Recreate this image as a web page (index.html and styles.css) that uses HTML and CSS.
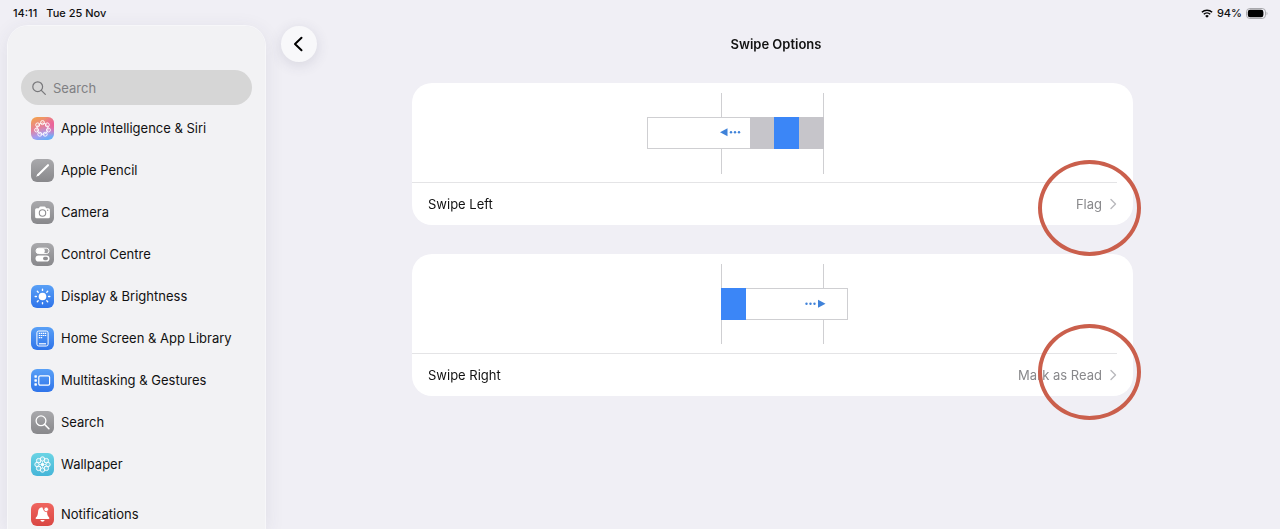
FILE: index.html
```html
<!DOCTYPE html>
<html lang="en">
<head>
    <meta charset="UTF-8">
    <meta name="viewport" content="width=device-width, initial-scale=1">
    <title>Swipe Options</title>
    <link rel="stylesheet" href="styles.css">
</head>
<body>
<div class="status-bar">
    <span>14:11</span>
    <span>Tue 25 Nov</span>
    <div class="status-right">
        <svg class="wifi" viewBox="0 0 12 9" width="12" height="9">
            <path d="M.9 3.2a7.4 7.4 0 0 1 10.2 0M2.8 5.2a4.6 4.6 0 0 1 6.4 0" fill="none" stroke="#000" stroke-width="1.5"/>
            <path d="M6 8.8 4.2 6.9a2.6 2.6 0 0 1 3.6 0z"/>
        </svg>
        <span>94%</span>
        <svg class="battery" viewBox="0 0 22 11" width="22" height="11">
            <rect x=".5" y=".5" width="19" height="10" rx="3.4" fill="none" stroke="#a9a9ad"/>
            <rect x="1.8" y="1.8" width="15.6" height="7.4" rx="2.2"/>
            <path d="M20.6 3.8c1.2.5 1.2 2.9 0 3.4z" fill="#a9a9ad"/>
        </svg>
    </div>
</div>

<div class="layout">
    <aside class="sidebar">
        <div class="search">
            <label for="search">
                <svg viewBox="0 0 14 14" width="14" height="14" fill="none" stroke="#77777a" stroke-width="1.2" stroke-linecap="round" role="img" aria-label="Search">
                    <circle cx="5.7" cy="5.7" r="4.9"/>
                    <path d="m9.3 9.3 4 4"/>
                </svg>
            </label>
            <input type="search" id="search" placeholder="Search">
        </div>
        <nav class="menu">
            <a class="menu-item" href="#intelligence">
                <svg class="icon" viewBox="0 0 23 23">
                    <defs>
                        <linearGradient id="ai" x1=".2" y1="0" x2=".6" y2="1">
                            <stop offset="0" stop-color="#f3a04e"/>
                            <stop offset=".45" stop-color="#e5809a"/>
                            <stop offset=".75" stop-color="#a79cf0"/>
                            <stop offset="1" stop-color="#6aaef6"/>
                        </linearGradient>
                        <radialGradient id="ai-pink" cx="1" cy=".35" r=".5">
                            <stop offset="0" stop-color="#ee5f95"/>
                            <stop offset="1" stop-color="#ee5f95" stop-opacity="0"/>
                        </radialGradient>
                        <linearGradient id="grey" x1="0" y1="0" x2="0" y2="1">
                            <stop offset="0" stop-color="#a9a9ac"/>
                            <stop offset="1" stop-color="#88888b"/>
                        </linearGradient>
                        <linearGradient id="blue" x1="0" y1="0" x2="0" y2="1">
                            <stop offset="0" stop-color="#59a0f6"/>
                            <stop offset="1" stop-color="#2f74ea"/>
                        </linearGradient>
                        <linearGradient id="cyan" x1="0" y1="0" x2="0" y2="1">
                            <stop offset="0" stop-color="#6ad4e4"/>
                            <stop offset="1" stop-color="#45b5d8"/>
                        </linearGradient>
                        <linearGradient id="red" x1="0" y1="0" x2="0" y2="1">
                            <stop offset="0" stop-color="#f0655f"/>
                            <stop offset="1" stop-color="#d94743"/>
                        </linearGradient>
                    </defs>
                    <rect width="23" height="23" rx="6" fill="url(#ai)"/>
                    <rect width="23" height="23" rx="6" fill="url(#ai-pink)"/>
                    <g fill="none" stroke="#fff" stroke-width=".9">
                        <circle cx="11.5" cy="11.7" r="5.6"/>
                        <circle cx="11.5" cy="5.6" r="2"/>
                        <circle cx="16.3" cy="7.9" r="2"/>
                        <circle cx="17.4" cy="13" r="2"/>
                        <circle cx="14.2" cy="17.200" r="2"/>
                        <circle cx="8.800" cy="17.200" r="2"/>
                        <circle cx="5.600" cy="13" r="2"/>
                        <circle cx="6.700" cy="7.900" r="2"/>
                    </g>
                </svg>
                <span>Apple Intelligence &amp; Siri</span>
            </a>
            <a class="menu-item" href="#pencil">
                <svg class="icon" viewBox="0 0 23 23">
                    <rect width="23" height="23" rx="6" fill="url(#grey)"/>
                    <path d="M7.3 15.7 17 6.2" stroke="#fff" stroke-width="2.1" stroke-linecap="round"/>
                    <path d="m5.2 17.8 1.2-2.9 1.7 1.7z" fill="#fff"/>
                </svg>
                <span>Apple Pencil</span>
            </a>
            <a class="menu-item" href="#camera">
                <svg class="icon" viewBox="0 0 23 23">
                    <rect width="23" height="23" rx="6" fill="url(#grey)"/>
                    <path d="M5.6 7.2h2.2l1-1.4q.3-.4.8-.4h3.8q.5 0 .8.4l1 1.4h2.2q1.5 0 1.5 1.5v7q0 1.5-1.5 1.500H5.600q-1.500 0-1.500-1.500v-7q0-1.500 1.500-1.500z" fill="#fff"/>
                    <circle cx="11.5" cy="12" r="3.2" fill="none" stroke="#8f8f92" stroke-width="1.1"/>
                    <circle cx="16.7" cy="9.3" r=".7" fill="#8f8f92"/>
                </svg>
                <span>Camera</span>
            </a>
            <a class="menu-item" href="#control-centre">
                <svg class="icon" viewBox="0 0 23 23">
                    <rect width="23" height="23" rx="6" fill="url(#grey)"/>
                    <rect x="5" y="5.2" width="13" height="5.4" rx="2.7" fill="none" stroke="#fff"/>
                    <rect x="5.2" y="5.2" width="8.6" height="5.4" rx="2.7" fill="#fff"/>
                    <rect x="4.5" y="12.4" width="14" height="6.2" rx="3.1" fill="#fff"/>
                    <rect x="12" y="13.8" width="5" height="3.4" rx="1.7" fill="#8f8f92"/>
                </svg>
                <span>Control Centre</span>
            </a>
            <a class="menu-item" href="#display">
                <svg class="icon" viewBox="0 0 23 23">
                    <rect width="23" height="23" rx="6" fill="url(#blue)"/>
                    <circle cx="11.5" cy="11.5" r="3.8" fill="#fff"/>
                    <path d="M11.5 4.2v1.2M11.5 17.6v1.2M4.2 11.5h1.2M17.6 11.5h1.2M6.3 6.3l.9.9M15.8 15.8l.9.9M6.3 16.7l.9-.9M15.8 7.2l.9-.9" stroke="#fff" stroke-width="1.4" stroke-linecap="round"/>
                </svg>
                <span>Display &amp; Brightness</span>
            </a>
            <a class="menu-item" href="#home-screen">
                <svg class="icon" viewBox="0 0 23 23">
                    <rect width="23" height="23" rx="6" fill="url(#blue)"/>
                    <rect x="5.9" y="4" width="11.2" height="15" rx="1.8" fill="none" stroke="#fff"/>
                    <path d="M7.8 6.4h7.6M7.8 8.5h7.6M7.8 10.6h3.8" stroke="#fff" stroke-width="1.2" stroke-dasharray="1.4 .6"/>
                    <path d="M8 16.8h7" stroke="#fff" stroke-width="1.2"/>
                </svg>
                <span>Home Screen &amp; App Library</span>
            </a>
            <a class="menu-item" href="#multitasking">
                <svg class="icon" viewBox="0 0 23 23">
                    <rect width="23" height="23" rx="6" fill="url(#blue)"/>
                    <rect x="7.8" y="6.8" width="10.8" height="9.4" rx="1.4" fill="none" stroke="#fff" stroke-width="1.2"/>
                    <g fill="#fff">
                        <rect x="3.4" y="6.2" width="2.5" height="2.5" rx=".6"/>
                        <rect x="3.4" y="10.2" width="2.5" height="2.5" rx=".6"/>
                        <rect x="3.4" y="14.2" width="2.5" height="2.5" rx=".6"/>
                    </g>
                </svg>
                <span>Multitasking &amp; Gestures</span>
            </a>
            <a class="menu-item" href="#search-settings">
                <svg class="icon" viewBox="0 0 23 23">
                    <rect width="23" height="23" rx="6" fill="url(#grey)"/>
                    <circle cx="10" cy="9.8" r="4.9" fill="none" stroke="#fff" stroke-width="1.3"/>
                    <path d="m13.7 13.5 4.2 4.2" stroke="#fff" stroke-width="1.6" stroke-linecap="round"/>
                </svg>
                <span>Search</span>
            </a>
            <a class="menu-item" href="#wallpaper">
                <svg class="icon" viewBox="0 0 23 23">
                    <rect width="23" height="23" rx="6" fill="url(#cyan)"/>
                    <g fill="#ffffff33" stroke="#fff" stroke-width=".9">
                        <circle cx="11.5" cy="6" r="2.2"/>
                        <circle cx="15.4" cy="7.6" r="2.2"/>
                        <circle cx="17" cy="11.5" r="2.2"/>
                        <circle cx="15.4" cy="15.4" r="2.2"/>
                        <circle cx="11.5" cy="17" r="2.2"/>
                        <circle cx="7.6" cy="15.4" r="2.2"/>
                        <circle cx="6" cy="11.5" r="2.2"/>
                        <circle cx="7.6" cy="7.6" r="2.2"/>
                    </g>
                    <circle cx="11.5" cy="11.5" r="1.6" fill="#fff"/>
                    <path d="M11.5 8v7M8 11.5h7M9 9l5 5M14 9l-5 5" stroke="#fff" stroke-width=".6"/>
                </svg>
                <span>Wallpaper</span>
            </a>
            <a class="menu-item new-group" href="#notifications">
                <svg class="icon" viewBox="0 0 23 23">
                    <rect width="23" height="23" rx="6" fill="url(#red)"/>
                    <path d="M11.2 4.3c-3 .2-4 2.4-4.2 4.9-.2 2.7-.5 3.6-2.1 5.3-.6.7-.3 1.5.6 1.5h12c.9 0 1.2-.8.6-1.5-1.5-1.6-1.9-2.6-2-5.2L12.6 7z" fill="#fff"/>
                    <circle cx="15.2" cy="6.4" r="2.3" fill="#fff" stroke="#e85a55" stroke-width=".8"/>
                    <path d="M9.3 17.1h4.4q-.5 1.7-2.2 1.7t-2.2-1.7z" fill="#fff"/>
                </svg>
                <span>Notifications</span>
            </a>
        </nav>
    </aside>

    <main class="content">
        <header class="header">
            <button class="back" type="button" aria-label="Back">
                <svg viewBox="0 0 12 16" width="12" height="16" fill="none" stroke="#000" stroke-width="2" stroke-linecap="round" stroke-linejoin="round">
                    <path d="M8.5 1.800 2 8l6.500 6.200"/>
                </svg>
            </button>
            <h1>Swipe Options</h1>
        </header>

        <div class="cards">
            <section class="card">
                <div class="preview">
                    <svg viewBox="0 0 251 99" width="251" height="99">
                        <path d="M74.5 10v81M176.5 10v81" stroke="#cfcfd2"/>
                        <rect x=".5" y="34.5" width="103" height="31" fill="#fff" stroke="#cfcfd2"/>
                        <rect x="103" y="34" width="74" height="32" fill="#c6c5ca"/>
                        <rect x="127" y="34" width="25" height="32" fill="#3b86f7"/>
                        <path d="M73 49.3l7.5-4v8z" fill="#3f82d9"/>
                        <g fill="#3f82d9">
                            <circle cx="84" cy="49.3" r="1.2"/>
                            <circle cx="88" cy="49.3" r="1.2"/>
                            <circle cx="92" cy="49.3" r="1.2"/>
                        </g>
                    </svg>
                </div>
                <a class="row" href="#swipe-left">
                    <span>Swipe Left</span>
                    <span class="value">Flag</span>
                    <svg class="chevron" viewBox="0 0 7 12" width="7" height="12"><path d="m1 1.500 4.500 4.500L1 10.500"/></svg>
                </a>
                <span class="ring ring-left"></span>
            </section>

            <section class="card">
                <div class="preview">
                    <svg viewBox="0 0 251 99" width="251" height="99">
                        <path d="M74.5 10v80M176.5 10v80" stroke="#cfcfd2"/>
                        <rect x="74.5" y="34.5" width="126" height="31" fill="#fff" stroke="#cfcfd2"/>
                        <rect x="74" y="34" width="25" height="32" fill="#3b86f7"/>
                        <path d="M178.5 49.7l-7.5-4v8z" fill="#3f82d9"/>
                        <g fill="#3f82d9">
                            <circle cx="159.5" cy="49.7" r="1.2"/>
                            <circle cx="163.5" cy="49.7" r="1.2"/>
                            <circle cx="167.5" cy="49.7" r="1.2"/>
                        </g>
                    </svg>
                </div>
                <a class="row" href="#swipe-right">
                    <span>Swipe Right</span>
                    <span class="value">Mark as Read</span>
                    <svg class="chevron" viewBox="0 0 7 12" width="7" height="12"><path d="m1 1.500 4.500 4.500L1 10.500"/></svg>
                </a>
                <span class="ring ring-right"></span>
            </section>
        </div>
    </main>
</div>
</body>
</html>
```
FILE: styles.css
```css
* {
    box-sizing: border-box;
    margin: 0;
    padding: 0;
}

body {
    display: flex;
    flex-direction: column;
    height: 100vh;
    overflow: hidden;
    background: #f0eff5;
    color: #111;
    font: 13px/20px Inter, "Liberation Sans", sans-serif;
}

a {
    color: inherit;
    text-decoration: none;
}

svg {
    display: block;
    flex: none;
}

/* status bar */
.status-bar {
    display: flex;
    flex: none;
    align-items: center;
    gap: 9px;
    height: 26px;
    padding: 0 12px 0 13px;
    font-size: 11px;
    font-weight: 500;
}

.status-right {
    display: flex;
    align-items: center;
    gap: 4px;
    margin-left: auto;
}

.layout {
    display: flex;
    flex: 1;
    min-height: 0;
}

/* sidebar */
.sidebar {
    flex: none;
    width: 257px;
    margin-left: 8px;
    padding: 44px 13px 0;
    overflow-y: auto;
    scrollbar-width: none;
    background: #f2f2f4;
    border-radius: 20px 20px 0 0;
    box-shadow: 0 0 0 1px #f7f7f9, 0 4px 20px rgba(60, 60, 90, 0.1);
}

.search {
    display: flex;
    align-items: center;
    gap: 7px;
    height: 35px;
    padding: 0 11px;
    background: #d6d6d6;
    border-radius: 18px;
}

.search input {
    flex: 1;
    min-width: 0;
    border: none;
    outline: none;
    background: none;
    color: #111;
    font: inherit;
    -webkit-appearance: none;
}

.search input::placeholder {
    color: #808083;
}

.menu {
    padding-top: 2px;
}

.menu-item {
    display: flex;
    align-items: center;
    gap: 7px;
    height: 42px;
    padding-left: 10px;
    white-space: nowrap;
}

.new-group {
    margin-top: 8px;
}

.icon {
    width: 23px;
    height: 23px;
}

/* content */
.content {
    flex: 1;
    min-width: 0;
}

.header {
    display: grid;
    grid-template-columns: 36px 1fr 36px;
    align-items: center;
    padding: 0 9px 0 16px;
}

.header h1 {
    font-size: 13px;
    font-weight: 600;
    text-align: center;
}

.back {
    display: flex;
    align-items: center;
    justify-content: center;
    width: 36px;
    height: 36px;
    border: none;
    border-radius: 50%;
    background: #f8f8fa;
    box-shadow: 0 3px 14px rgba(60, 60, 90, 0.14);
}

.cards {
    display: grid;
    gap: 29px;
    padding: 21px 147px;
}

.card {
    position: relative;
    background: #fff;
    border-radius: 20px;
}

.preview {
    display: flex;
    justify-content: center;
}

.row {
    display: flex;
    align-items: center;
    height: 43px;
    padding: 0 16px;
    background: linear-gradient(#e4e4e6, #e4e4e6) no-repeat left top / calc(100% - 16px) 1px;
}

.value {
    margin-left: auto;
    color: #88888b;
}

.chevron {
    margin-left: 8px;
    fill: none;
    stroke: #b9b9bd;
    stroke-width: 1.4;
    stroke-linecap: round;
    stroke-linejoin: round;
}

/* rings drawn over the current values */
.ring {
    position: absolute;
    z-index: 1;
    right: -8px;
    width: 103px;
    height: 96px;
    border: 4px solid #ca5f4c;
    border-radius: 50%;
    pointer-events: none;
}

.ring-left {
    top: 77px;
}

.ring-right {
    top: 70px;
}
```
